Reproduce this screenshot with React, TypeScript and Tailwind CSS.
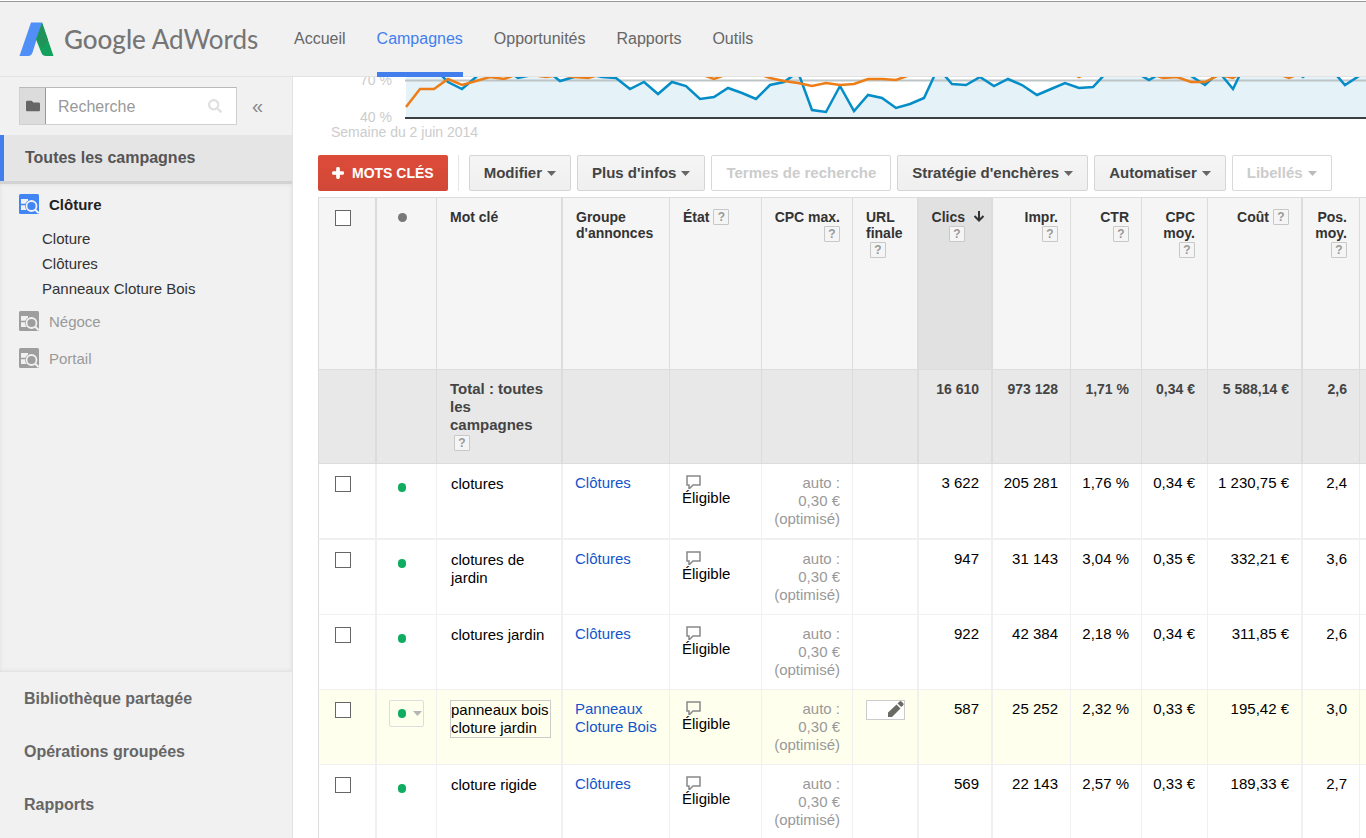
import type { ReactNode } from "react";
import { FaFolder, FaPlus, FaSearch } from "react-icons/fa";

const NAV = ["Accueil", "Campagnes", "Opportunités", "Rapports", "Outils"];

const BLUE_POINTS =
  "406,60 420,60 434,68 448,82 462,89 476,77 490,66 504,68 518,78 532,75 546,70 560,81 574,77 588,74 602,77 616,78 630,89 644,82 658,94 672,82 686,86 700,99 714,97 728,88 742,93 756,99 770,85 784,82 798,72 812,110 826,112 840,86 854,111 868,95 882,98 896,108 910,104 924,98 938,68 952,84 966,85 980,77 994,86 1008,79 1022,85 1037,95 1051,89 1065,83 1079,88 1093,87 1107,72 1121,62 1135,72 1149,80 1163,72 1177,65 1191,76 1205,85 1219,72 1233,89 1247,60 1261,60 1275,66 1289,66 1303,77 1317,66 1331,69 1345,85 1359,76 1373,60 1387,60";

const ORANGE_POINTS =
  "406,107 420,89 434,89 448,79 462,85 476,81 490,77 504,79 518,74 532,75 546,77 560,75 574,77 588,78 602,74 616,70 700,74 714,79 728,74 742,70 756,73 770,78 784,81 798,83 812,86 826,83 840,85 854,84 868,79 882,79 896,80 910,75 924,68 1065,70 1079,77 1093,70 1149,73 1163,78 1177,77 1191,82 1205,82 1219,75 1233,78 1247,70 1275,73 1289,78 1303,72 1387,60";

interface KeywordRow {
  keyword: string;
  group: string;
  stats: string[];
  active?: boolean;
}

const ROWS: KeywordRow[] = [
  { keyword: "clotures", group: "Clôtures", stats: ["3 622", "205 281", "1,76 %", "0,34 €", "1 230,75 €", "2,4"] },
  { keyword: "clotures de jardin", group: "Clôtures", stats: ["947", "31 143", "3,04 %", "0,35 €", "332,21 €", "3,6"] },
  { keyword: "clotures jardin", group: "Clôtures", stats: ["922", "42 384", "2,18 %", "0,34 €", "311,85 €", "2,6"] },
  {
    keyword: "panneaux bois cloture jardin",
    group: "Panneaux Cloture Bois",
    stats: ["587", "25 252", "2,32 %", "0,33 €", "195,42 €", "3,0"],
    active: true,
  },
  { keyword: "cloture rigide", group: "Clôtures", stats: ["569", "22 143", "2,57 %", "0,33 €", "189,33 €", "2,7"] },
];

const TOTALS = ["16 610", "973 128", "1,71 %", "0,34 €", "5 588,14 €", "2,6"];

// Column groups are closed by a double rule
const STAT_BORDERS = ["border-r-2", "border-r", "border-r", "border-r", "border-r-2", "border-r"];

function Logo() {
  return (
    <a href="#" className="flex items-center w-[275px] pl-[19px] text-[#757575]">
      <svg width="35" height="35" viewBox="0 0 35 35">
        <path d="M12 .5h11L13.500 30.500Q12.300 34 9 34H.5Z" fill="#4f8ff7" />
        <path d="M23 .5 34.500 34H27Q23.500 34 22.500 31L17 17.500Z" fill="#12a05c" />
        <path d="M23 .5 29 18l-5.500 8L17.500 17Z" fill="#21935a" />
      </svg>
      <span className="ml-[10px] font-['Lato'] text-[26px] leading-8 whitespace-nowrap">
        <span className="font-medium">Google</span> AdWords
      </span>
    </a>
  );
}

function CampaignIcon({ color }: { color: string }) {
  return (
    <svg width="20" height="20" viewBox="0 0 20 20" className="shrink-0">
      <rect width="20" height="20" rx="1.500" fill={color} />
      <path d="M2 5h7v2.500L7 10v3l2 3H2Z" fill="#f1f1f1" />
      <path d="M2 10.500h5" stroke={color} strokeWidth="1.500" />
      <circle cx="12.500" cy="12" r="6.500" fill={color} />
      <circle cx="12.500" cy="12" r="5" fill="none" stroke="#f1f1f1" strokeWidth="1.800" />
      <path d="m16 15.500 3.500 3.500" stroke="#f1f1f1" strokeWidth="2" />
    </svg>
  );
}

function Caret({ className = "text-[#777]" }: { className?: string }) {
  return (
    <svg width="9" height="5" viewBox="0 0 9 5" className={className}>
      <path d="M0 0h9L4.500 5Z" fill="currentColor" />
    </svg>
  );
}

function Help() {
  return (
    <button
      type="button"
      className="inline-block align-top ml-1 w-4 h-4 border border-[#c8c8c8] rounded-[1px] bg-[#f5f5f5] text-[#999] text-[12px] leading-[14px] font-bold text-center"
    >
      ?
    </button>
  );
}

function ToolbarButton({ children, caret, disabled }: { children: ReactNode; caret?: boolean; disabled?: boolean }) {
  return (
    <button
      type="button"
      disabled={disabled}
      className={
        disabled
          ? "flex items-center gap-[5px] h-9 px-[14px] border border-[#d9d9d9] rounded-xs bg-white text-[#ccc] whitespace-nowrap"
          : "flex items-center gap-[5px] h-9 px-[14px] border border-[#d5d5d5] rounded-xs bg-linear-to-b from-[#f5f5f5] to-[#efefef] text-[#444] whitespace-nowrap"
      }
    >
      {children}
      {caret && <Caret className={disabled ? "text-[#bbb]" : "text-[#666]"} />}
    </button>
  );
}

function Sidebar() {
  return (
    <aside className="flex flex-col w-[293px] shrink-0 bg-[#f1f1f1] border-r border-[#e3e3e3]">
      <div className="flex items-center py-[10px] pl-[19px]">
        <div className="flex h-[38px] w-[218px] border border-[#d0d0d0] border-t-[#b9b9b9] bg-white">
          <button type="button" className="flex items-center justify-center w-[26px] shrink-0 bg-[#dcdcdc] border-r border-[#999]">
            <FaFolder size={14} className="text-[#666]" />
          </button>
          <input
            type="text"
            aria-label="Recherche"
            placeholder="Recherche"
            className="min-w-0 flex-1 pt-[2px] pl-3 text-base text-black placeholder:text-[#999] outline-none"
          />
          <FaSearch size={14} className="mr-[14px] self-center text-[#e0e0e0]" />
        </div>
        <button type="button" className="ml-[15px] text-[20px] leading-6 text-[#888]">
          «
        </button>
      </div>
      <div className="border-b-3 border-[#d3d3d3]">
        <a href="#" className="block pl-[21px] border-l-4 border-[#427fed] bg-[#e5e5e5] font-bold text-base leading-[46px] text-[#555]">
          Toutes les campagnes
        </a>
      </div>
      <nav className="flex-1 pt-[10px] pl-[19px] text-[15px] leading-[22px] shadow-[inset_0_0_4px_#dedede]">
        <a href="#" className="flex gap-[10px] font-bold text-[#222]">
          <CampaignIcon color="#4285f4" />
          Clôture
        </a>
        <ul className="mt-[10px] pl-[23px] leading-[25px] text-[#333]">
          {["Cloture", "Clôtures", "Panneaux Cloture Bois"].map((name) => (
            <li key={name}>
              <a href="#">{name}</a>
            </li>
          ))}
        </ul>
        <div className="flex flex-col gap-[15px] mt-[10px] text-[#999]">
          {["Négoce", "Portail"].map((name) => (
            <a key={name} href="#" className="flex gap-[10px]">
              <CampaignIcon color="#9e9e9e" />
              {name}
            </a>
          ))}
        </div>
      </nav>
      <div className="pb-[7px] border-t border-[#e3e3e3] text-base font-bold leading-[53px] text-[#666]">
        {["Bibliothèque partagée", "Opérations groupées", "Rapports"].map((name) => (
          <a key={name} href="#" className="block pl-6">
            {name}
          </a>
        ))}
      </div>
    </aside>
  );
}

function Chart() {
  return (
    <svg className="block w-full h-[78px] text-[14px]">
      <g transform="translate(-318 -77)">
        <polygon points={`406,118 ${BLUE_POINTS} 1387,118`} fill="#e5f2f8" />
        <path d="M405 80.500H3000" stroke="#bcc4c6" strokeWidth="2" />
        <polyline points={BLUE_POINTS} fill="none" stroke="#058dc7" strokeWidth="2.500" />
        <polyline points={ORANGE_POINTS} fill="none" stroke="#ed7e17" strokeWidth="2.500" />
        <path d="M405 118H3000" stroke="#3a4144" strokeWidth="2" />
        <g fill="#ccc">
          <text x="392" y="85" textAnchor="end">70 %</text>
          <text x="392" y="122" textAnchor="end">40 %</text>
          <text x="331" y="137">Semaine du 2 juin 2014</text>
        </g>
      </g>
    </svg>
  );
}

function HeaderCell({ lines, border, left, help = "below" }: { lines: string[]; border: string; left?: boolean; help?: "below" | "inline" | "none" }) {
  return (
    <th
      scope="col"
      className={`${border} ${left ? "text-left pl-[13px]" : "text-right pr-3"} pt-[11px] align-top border-y border-[#dcdcdc] bg-[#f5f5f5] whitespace-nowrap`}
    >
      {lines.map((line, i) => (
        <div key={line}>
          {line}
          {help === "inline" && i === lines.length - 1 && <Help />}
        </div>
      ))}
      {help === "below" && (
        <div className="pt-px">
          <Help />
        </div>
      )}
    </th>
  );
}

function Dot({ className }: { className: string }) {
  return <span className={`${className} block rounded-full`} />;
}

function Row({ row, first }: { row: KeywordRow; first: boolean }) {
  const cell = `${row.active ? "bg-[#ffffee]" : "bg-white"} ${first ? "border-b-2 h-[76px]" : "border-b h-[75px]"} border-[#f0f0f0] align-top pt-[10px]`;

  return (
    <tr>
      <td className={`${cell} border-r-2 border-l border-l-[#dcdcdc] pl-4`}>
        <input type="checkbox" aria-label={row.keyword} className="block mt-[2px] w-4 h-4 appearance-none border border-[#666] bg-white" />
      </td>
      <td className={`${cell} border-r pl-3`}>
        <button
          type="button"
          className={`${row.active ? "border-[#ddd]" : "border-transparent"} flex items-center gap-[7px] w-[35px] h-[27px] pl-2 border rounded-xs`}
        >
          <Dot className="w-2 h-[9px] bg-[#10ac5f] shrink-0" />
          {row.active && <Caret className="text-[#b5b5b5] shrink-0" />}
        </button>
      </td>
      <td className={`${cell} border-r-2 pl-[13px] pr-[10px]`}>
        <div className={`${row.active ? "border-[#ccc]" : "border-transparent"} border`}>{row.keyword}</div>
      </td>
      <td className={`${cell} border-r pl-3 pr-2`}>
        <a href="#" className="text-[#15c]">{row.group}</a>
      </td>
      <td className={`${cell} border-r pl-3`}>
        <svg width="15" height="15" viewBox="0 0 15 15" className="ml-1 block">
          <path d="M1 2h13v9H7l-4 4v-4H1Z" fill="none" stroke="#888" strokeWidth="1.500" />
        </svg>
        Éligible
      </td>
      <td className={`${cell} border-r pr-3 text-right text-[#999]`}>
        auto :<br />0,30 €<br />(optimisé)
      </td>
      <td className={`${cell} border-r-2 pl-[13px]`}>
        {row.active && (
          <button type="button" className="flex justify-end w-[39px] h-5 border border-[#ccc] bg-white">
            <svg width="17" height="17" viewBox="0 0 17 17" fill="#6b6b66">
              <path d="M1 16v-4.500L9.500 3.500l4 4L5 16Z" />
              <path d="m10.500 2.500 2-2q1-.8 2 0l1.700 1.700q.8 1 0 2l-1.900 1.900Z" />
            </svg>
          </button>
        )}
      </td>
      {row.stats.map((value, i) => (
        <td key={i} className={`${cell} ${STAT_BORDERS[i]} pr-3 text-right whitespace-nowrap`}>
          {value}
        </td>
      ))}
      <td className={cell} />
    </tr>
  );
}

function KeywordTable() {
  const total = "bg-[#e8e8e8] border-b border-[#dcdcdc] align-top pt-[10px]";

  return (
    <table className="w-full table-fixed border-separate border-spacing-0 text-[15px] leading-[18px] text-black">
      <colgroup>
        <col className="w-[59px]" />
        <col className="w-[60px]" />
        <col className="w-[126px]" />
        <col className="w-[107px]" />
        <col className="w-[92px]" />
        <col className="w-[91px]" />
        <col className="w-[66px]" />
        <col className="w-[74px]" />
        <col className="w-[78px]" />
        <col className="w-[71px]" />
        <col className="w-[66px]" />
        <col className="w-[95px]" />
        <col className="w-[57px]" />
        <col />
      </colgroup>
      <thead className="text-[14px] leading-4 text-[#333]">
        <tr className="h-[173px]">
          <th className="border border-r-2 border-[#dcdcdc] bg-[#f5f5f5] align-top pt-3 pl-4">
            <input type="checkbox" aria-label="Tout sélectionner" className="block w-4 h-4 appearance-none border border-[#666] bg-white" />
          </th>
          <th className="border-y border-r border-[#dcdcdc] bg-[#f5f5f5] align-top pt-[15px] pl-[21px]">
            <Dot className="w-[9px] h-[9px] bg-[#777]" />
          </th>
          <HeaderCell lines={["Mot clé"]} border="border-r-2" left help="none" />
          <HeaderCell lines={["Groupe", "d'annonces"]} border="border-r" left help="none" />
          <HeaderCell lines={["État"]} border="border-r" left help="inline" />
          <HeaderCell lines={["CPC max."]} border="border-r" />
          <HeaderCell lines={["URL", "finale"]} border="border-r-2" left />
          <th scope="col" aria-sort="descending" className="border-y border-r-2 border-[#dcdcdc] bg-[#e1e1e1] align-top pt-[11px] pr-[6px]">
            <div className="flex justify-end gap-2">
              <div className="text-right">
                Clics
                <div className="pt-px">
                  <Help />
                </div>
              </div>
              <svg width="12" height="12" viewBox="0 0 12 12" className="mt-[2px]" fill="none" stroke="#333" strokeWidth="2">
                <path d="M6 0v9M1.500 5 6 9.500 10.500 5" />
              </svg>
            </div>
          </th>
          <HeaderCell lines={["Impr."]} border="border-r" />
          <HeaderCell lines={["CTR"]} border="border-r" />
          <HeaderCell lines={["CPC", "moy."]} border="border-r" />
          <HeaderCell lines={["Coût"]} border="border-r-2" help="inline" />
          <HeaderCell lines={["Pos.", "moy."]} border="border-r" />
          <th className="border-y border-[#dcdcdc] bg-[#f5f5f5]" />
        </tr>
      </thead>
      <tbody>
        <tr className="h-[94px] font-bold text-[#444]">
          <td className={`${total} border-l border-r-2`} />
          <td className={`${total} border-r`} />
          <td className={`${total} border-r-2 pl-[13px] pr-3`}>
            Total : toutes les campagnes
            <div className="pt-px">
              <Help />
            </div>
          </td>
          <td className={`${total} border-r`} />
          <td className={`${total} border-r`} />
          <td className={`${total} border-r`} />
          <td className={`${total} border-r-2`} />
          {TOTALS.map((value, i) => (
            <td key={i} className={`${total} ${STAT_BORDERS[i]} pr-3 text-right text-[14px] whitespace-nowrap`}>
              {value}
            </td>
          ))}
          <td className={total} />
        </tr>
        {ROWS.map((row, i) => (
          <Row key={row.keyword} row={row} first={i === 0} />
        ))}
      </tbody>
    </table>
  );
}

export default function App() {
  return (
    <div className="flex flex-col h-screen overflow-hidden bg-white pt-px font-['Liberation_Sans',Arial,sans-serif]">
      <header className="flex h-[76px] shrink-0 border-t border-t-[#999] border-b border-b-[#e3e3e3] bg-[#f1f1f1]">
        <Logo />
        <nav className="flex gap-[31px] pl-[19px] -mb-px text-base text-[#666]">
          {NAV.map((item) => (
            <a
              key={item}
              href="#"
              className={
                item === "Campagnes"
                  ? "pt-[25px] border-b-5 border-[#427fed] text-[#427fed]"
                  : "pt-[25px]"
              }
            >
              {item}
            </a>
          ))}
        </nav>
      </header>
      <div className="flex flex-1 min-h-0">
        <Sidebar />
        <main className="flex-1 min-w-0 pl-[25px] overflow-hidden">
          <Chart />
          <div className="flex items-center gap-[6px] mb-[6px] text-[15px] font-bold">
            <button type="button" className="flex items-center gap-2 h-9 px-[14px] rounded-xs bg-linear-to-b from-[#dd4b39] to-[#d14836] text-[14px] text-white whitespace-nowrap">
              <FaPlus size={12} stroke="currentColor" strokeWidth={60} />
              MOTS CLÉS
            </button>
            <div className="w-px h-9 mx-1 bg-[#e5e5e5]" />
            <ToolbarButton caret>Modifier</ToolbarButton>
            <ToolbarButton caret>Plus d'infos</ToolbarButton>
            <ToolbarButton disabled>Termes de recherche</ToolbarButton>
            <ToolbarButton caret>Stratégie d'enchères</ToolbarButton>
            <ToolbarButton caret>Automatiser</ToolbarButton>
            <ToolbarButton caret disabled>Libellés</ToolbarButton>
          </div>
          <KeywordTable />
        </main>
      </div>
    </div>
  );
}
